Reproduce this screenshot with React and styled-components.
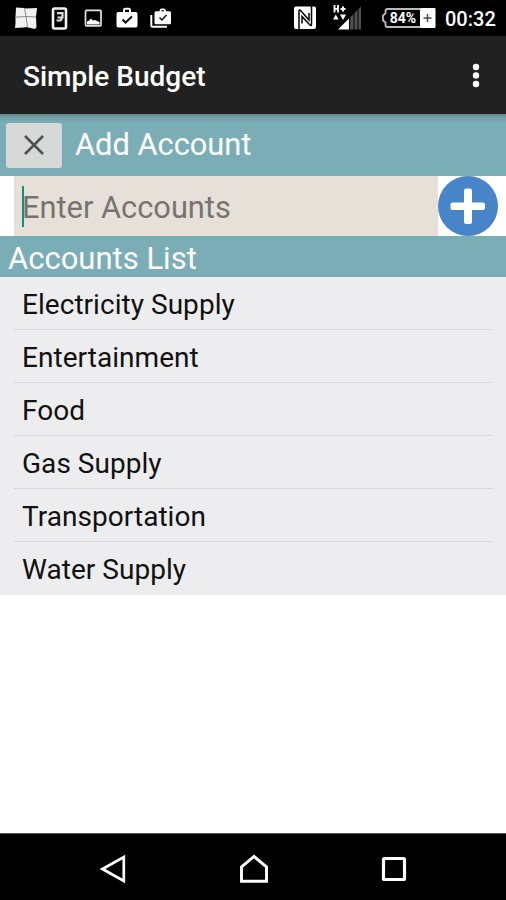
import React from "react";
import styled, { createGlobalStyle } from "styled-components";

const accounts = [
  "Electricity Supply",
  "Entertainment",
  "Food",
  "Gas Supply",
  "Transportation",
  "Water Supply",
];

// STATUS BAR ICONS
const NoticeIcons = () => (
  <svg width="190" height="36" viewBox="0 0 190 36">
    {/* WINDOWS */}
    <path d="M16 7.500l8.500.5 1.500.5 11-.5-1 9 .5 10.500-2 1.500-6-1.500-2.500-.5-2 .5-9 .5.500-5 0-6z" fill="#f2f2f2" />
    <path d="M15 17.200l11-.7 10 .5M24.500 8l1.500 8.500 1.500 11" fill="none" stroke="#8a8a8a" strokeWidth="1" />
    {/* PHONE */}
    <rect x="53" y="8.500" width="13" height="20" rx="1.500" fill="none" stroke="#f2f2f2" strokeWidth="2.600" />
    <path d="M57 13.200h5.500v4.300h-5M56.500 20.500h4l1.500-2" fill="none" stroke="#ddd" strokeWidth="2.200" />
    {/* IMAGE */}
    <rect x="85.500" y="10.300" width="15.500" height="15.500" rx="1" fill="none" stroke="#e4e4e4" strokeWidth="1.700" />
    <path d="M87 24.500v-3l2-1 2-2 2 2 2-.5 2 1 2.500 1v2.500z" fill="#fff" />
    {/* BAG */}
    <path d="M124 12.500v-2.500q0-1.200 1.200-1.200h3.600q1.200 0 1.200 1.200v2.500" fill="none" stroke="#fff" strokeWidth="2" />
    <rect x="116.500" y="12" width="21" height="15.500" rx="1.800" fill="#fff" />
    <path d="M122.500 19.500l3 3 6.500-6" fill="none" stroke="#111" strokeWidth="2" />
    {/* BAGS */}
    <path d="M160.500 12v-1.500q0-1.200 1.200-1.200h2.100q1.200 0 1.200 1.200v1.500" fill="none" stroke="#fff" strokeWidth="1.700" />
    <rect x="154.500" y="11.300" width="16.500" height="13" rx="1.500" fill="#fff" />
    <path d="M151.300 15v10.500q0 1.200 1.200 1.200h14.500" fill="none" stroke="#fff" strokeWidth="2" />
    <path d="M159.500 17.500l2.500 2.500 4.500-5" fill="none" stroke="#111" strokeWidth="1.500" />
  </svg>
);

const NfcIcon = () => (
  <svg width="22" height="24" viewBox="0 0 22 24">
    <rect x="0" y=".5" width="22" height="22.500" rx="2" fill="#fff" />
    <path
      d="M5 23V5.500q0-2.500 1.800-.8L15 14V7M17.500 0v18q0 2.500-1.800.8L8 10.500v7"
      fill="none"
      stroke="#000"
      strokeWidth="1.500"
    />
  </svg>
);

const SignalIcon = () => (
  <svg width="29" height="28" viewBox="0 0 29 28">
    <path d="M5 25.500L16 14.500v11z" fill="#fff" />
    <path d="M17.200 13.300l3.300-3.300v15.500h-3.300zM21.500 9l3-3v19.500h-3zM25.500 5L28 2.500v23h-2.500z" fill="#505050" />
    <path d="M1.500 1v7.500M5 1v7.500M1.500 4.800h3.500" stroke="#fff" strokeWidth="1.800" />
    <path d="M7.500 5h5M10 2.500v5" stroke="#fff" strokeWidth="2" />
    <path d="M0 15.500l2.800-5 2.800 5zM7 10.500h6l-3 5.500z" fill="#fff" />
  </svg>
);

const BatteryIcon = () => (
  <svg width="55" height="22" viewBox="0 0 55 22">
    <path d="M39 2H6.500Q4.500 2 4.500 4V6.500L2 8.500v5l2.500 2V18q0 2 2 2H39" fill="none" stroke="#bbb" strokeWidth="1.800" />
    <rect x="39" y="1" width="15.500" height="20" rx="1" fill="#fff" />
    <path d="M42.500 11h8M46.500 7v8" stroke="#444" strokeWidth="1.400" />
  </svg>
);

const App = () => (
  <>
    <GlobalStyle />
    <Screen>
      <StatusBar>
        <NoticeIcons />
        <StatusRight>
          <NfcIcon />
          <SignalIcon />
          <Battery>
            <BatteryIcon />
            <Percent>84%</Percent>
          </Battery>
          <Clock>00:32</Clock>
        </StatusRight>
      </StatusBar>

      <AppBar>
        <AppTitle>Simple Budget</AppTitle>
        <MenuButton aria-label="More options">
          <svg width="8" height="26" viewBox="0 0 8 26" fill="#fff">
            <circle cx="4" cy="4" r="3.200" />
            <circle cx="4" cy="12.500" r="3.200" />
            <circle cx="4" cy="21" r="3.200" />
          </svg>
        </MenuButton>
      </AppBar>

      <AddHeader>
        <CloseButton aria-label="Close">
          <svg width="20" height="20" viewBox="0 0 20 20">
            <path d="M1 1l18 18M19 1L1 19" stroke="#505050" strokeWidth="2.500" />
          </svg>
        </CloseButton>
        <AddTitle>Add Account</AddTitle>
      </AddHeader>

      <EntryRow>
        <Field>
          <Caret />
          <Hint>Enter Accounts</Hint>
        </Field>
        <AddButton aria-label="Add">
          <svg width="60" height="60" viewBox="0 0 60 60">
            <circle cx="30" cy="30" r="30" fill="#4884c8" />
            <g fill="#fff">
              <rect x="26" y="12.500" width="8" height="35.500" rx="2" />
              <rect x="12.500" y="26.500" width="34.500" height="7.500" rx="2" />
            </g>
          </svg>
        </AddButton>
      </EntryRow>

      <ListHeader>
        <ListTitle>Accounts List</ListTitle>
      </ListHeader>
      <List>
        {accounts.map((name) => (
          <Item key={name}>
            <ItemText>{name}</ItemText>
          </Item>
        ))}
      </List>

      <NavBar>
        <svg width="28" height="30" viewBox="0 0 28 30">
          <path d="M2.500 15L23.800 3v24z" fill="none" stroke="#fff" strokeWidth="2.700" />
        </svg>
        <svg width="30" height="30" viewBox="0 0 30 30">
          <path d="M2.500 27.300V13L15 2.500 27.500 13v14.300z" fill="none" stroke="#fff" strokeWidth="2.900" />
        </svg>
        <svg width="26" height="26" viewBox="0 0 26 26">
          <rect x="2.500" y="2.500" width="21" height="21" rx="1" fill="none" stroke="#fff" strokeWidth="3.200" />
        </svg>
      </NavBar>
    </Screen>
  </>
);

export default App;

// GLOBAL
const GlobalStyle = createGlobalStyle`
  * {
    box-sizing: border-box;
  }
  body {
    margin: 0;
    background: #fff;
    font-family: Roboto, "Liberation Sans", sans-serif;
  }
  svg {
    display: block;
    flex: none;
  }
  button {
    border: none;
    padding: 0;
    background: none;
  }
`;

const Screen = styled.div`
  width: 506px;
  height: 900px;
  display: flex;
  flex-direction: column;
  overflow: hidden;
  background: #fff;
`;

// STATUS BAR
const StatusBar = styled.div`
  flex: none;
  height: 36px;
  display: flex;
  justify-content: space-between;
  background: #000;
`;

const StatusRight = styled.div`
  display: flex;
  align-items: center;
  padding-right: 10px;

  svg + svg {
    margin-left: 17px;
  }
`;

const Battery = styled.div`
  position: relative;
  margin-left: 19px;
`;

const Percent = styled.span`
  position: absolute;
  top: 0;
  left: 7px;
  width: 30px;
  line-height: 22px;
  text-align: center;
  font-size: 14px;
  font-weight: 700;
  color: #fff;
`;

const Clock = styled.span`
  width: 51px;
  margin-left: 9px;
  font-size: 20px;
  line-height: 36px;
  padding-top: 1px;
  font-weight: 500;
  color: #fff;
  white-space: nowrap;
`;

// APP BAR
const AppBar = styled.header`
  flex: none;
  height: 78px;
  display: flex;
  align-items: center;
  justify-content: space-between;
  padding: 2px 26px 0 23px;
  background: #212121;
`;

const AppTitle = styled.h1`
  margin: 0;
  font-size: 28px;
  font-weight: 500;
  color: #fff;
`;

const MenuButton = styled.button`
  display: flex;
`;

// ADD ACCOUNT
const AddHeader = styled.div`
  flex: none;
  height: 62px;
  display: flex;
  align-items: center;
  padding-left: 6px;
  background: linear-gradient(#64898e 0, #74a3ab 4px, #7badb7 9px);
`;

const CloseButton = styled.button`
  width: 56px;
  height: 45px;
  display: flex;
  align-items: center;
  justify-content: center;
  border-radius: 3px;
  background: #d6d9d8;
`;

const Title = styled.h2`
  margin: 0;
  font-size: 31px;
  font-weight: 400;
  color: #fff;
  white-space: nowrap;
`;

const AddTitle = styled(Title)`
  margin: -2px 0 0 13px;
  font-size: 30.8px;
`;

// ENTRY
const EntryRow = styled.div`
  flex: none;
  height: 60px;
  display: flex;
  padding: 0 8px 0 14px;
`;

const Field = styled.div`
  flex: 1;
  display: flex;
  align-items: center;
  padding: 3px 0 0 8px;
  background: #e6e0d9;
`;

const Caret = styled.span`
  width: 2px;
  height: 41px;
  margin-top: -3px;
  background: #148c80;
`;

const Hint = styled.span`
  margin-left: -2px;
  font-size: 30.8px;
  color: #767370;
  white-space: nowrap;
`;

const AddButton = styled.button`
  width: 60px;
`;

// LIST
const ListHeader = styled.div`
  flex: none;
  height: 41px;
  display: flex;
  align-items: center;
  padding: 3px 0 0 8px;
  background: #7badb7;
`;

const ListTitle = styled(Title)``;

const List = styled.ul`
  flex: none;
  margin: 0;
  padding: 0 14px;
  list-style: none;
  background: #ededef;
`;

const Item = styled.li`
  height: 53px;
  display: flex;
  align-items: center;
  padding: 3px 8px 0;
  border-bottom: 1px solid #d8d8da;

  &:last-child {
    border-bottom-color: transparent;
  }
`;

const ItemText = styled.span`
  font-size: 28px;
  letter-spacing: 0.04px;
  color: #111;
  white-space: nowrap;
`;

// NAVIGATION
const NavBar = styled.nav`
  flex: none;
  height: 67px;
  margin-top: auto;
  display: flex;
  align-items: center;
  justify-content: space-between;
  padding: 4px 99px 0 100px;
  border-top: 1px solid #555;
  background: #000;

  svg:nth-child(2) {
    margin-left: -2px;
  }
`;
